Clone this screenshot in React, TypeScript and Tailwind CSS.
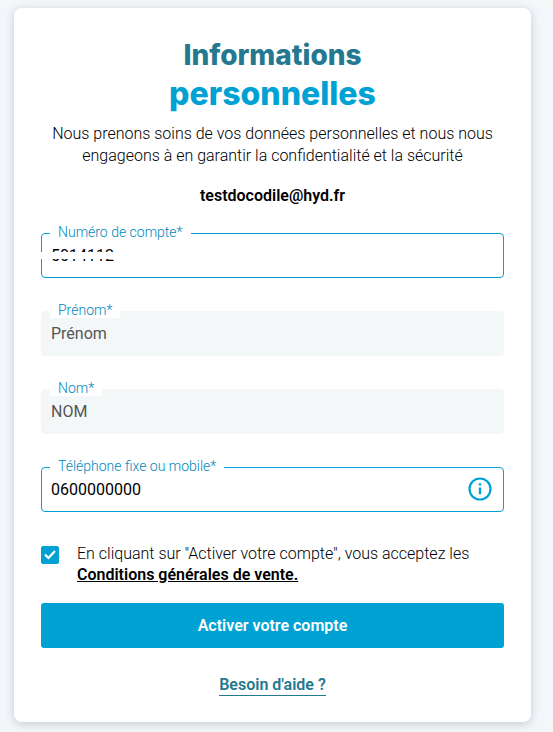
import { useState } from 'react';
import type { InputHTMLAttributes, ReactNode } from 'react';
import { clsx } from 'clsx';

type FieldProps = InputHTMLAttributes<HTMLInputElement> & {
  id: string;
  label: string;
  children?: ReactNode;
};

function Field({ id, label, children, disabled, ...props }: FieldProps) {
  return (
    <div className="relative">
      <input
        id={id}
        disabled={disabled}
        className={clsx(
          'block h-[45px] w-full rounded border px-[9px] text-base font-normal outline-none',
          disabled ? 'border-[#f4f7f8] bg-[#f4f7f8] text-[#555555]' : 'border-[#00a2d3] bg-white text-black',
        )}
        {...props}
      />
      <label
        htmlFor={id}
        className="absolute -top-[9px] left-[9px] bg-white px-2 text-sm leading-4 text-[#0088bd]"
      >
        {label}
      </label>
      {children}
    </div>
  );
}

export default function App() {
  const [phone, setPhone] = useState('0600000000');
  const [accepted, setAccepted] = useState(true);

  return (
    <div className="bg-[#f4f7f8] pt-2 pb-2.5 font-[Roboto,sans-serif] text-base font-light text-black">
      <div className="bg-[#f4f6fb] pr-[22px] pl-3.5">
        <main className="rounded-lg bg-white px-[27px] pt-[30px] pb-[26px] shadow-[0_2px_10px_rgba(60,70,90,0.25)]">
          <h1 className="text-center font-[Inter,sans-serif] font-extrabold">
            <span className="block text-[28px] leading-[34px] text-[#24788f]">Informations</span>
            <span className="block text-[32px] leading-[44px] text-[#00a2d3]">personnelles</span>
          </h1>

          <p className="mt-[7px] text-center leading-[22px]">
            Nous prenons soins de vos données personnelles et nous nous engageons à en garantir la
            confidentialité et la sécurité
          </p>
          <p className="mt-[18px] text-center leading-[22px] font-semibold">testdocodile@hyd.fr</p>

          <form className="mt-[26px]" onSubmit={(e) => e.preventDefault()}>
            <div className="flex flex-col gap-[33px]">
              <Field id="account" label="Numéro de compte*" defaultValue="5014112">
                <span className="absolute top-[19px] -left-1 h-[7px] w-20 bg-white" />
              </Field>
              <Field id="firstname" label="Prénom*" defaultValue="Prénom" disabled />
              <Field id="lastname" label="Nom*" defaultValue="NOM" disabled />
              <Field
                id="phone"
                type="tel"
                label="Téléphone fixe ou mobile*"
                value={phone}
                onChange={(e) => setPhone(e.target.value)}
              >
                <button type="button" aria-label="Information" className="absolute top-2.5 right-3 text-[#00a2d3]">
                  <svg viewBox="0 0 24 24" className="size-6" fill="none">
                    <circle cx="12" cy="12" r="10.5" stroke="currentColor" strokeWidth="2.2" />
                    <path d="M12 6.2v2.4M12 10.6v6.6" stroke="currentColor" strokeWidth="2.4" />
                  </svg>
                </button>
              </Field>
            </div>

            <div className="mt-[31px] flex items-start gap-[18px]">
              <span className="relative mt-[3px] size-[18px] shrink-0">
                <input
                  id="terms"
                  type="checkbox"
                  checked={accepted}
                  onChange={(e) => setAccepted(e.target.checked)}
                  className="peer block size-[18px] appearance-none rounded-xs border border-[#00a2d3] checked:bg-[#00a2d3]"
                />
                <svg
                  viewBox="0 0 18 18"
                  className="pointer-events-none absolute inset-0 hidden size-[18px] peer-checked:block"
                  fill="none"
                >
                  <path d="M4 8.6l3.5 3.4 6.5-7" stroke="white" strokeWidth="2.2" />
                </svg>
              </span>
              <label htmlFor="terms" className="leading-[21px]">
                En cliquant sur "Activer votre compte", vous acceptez les{' '}
                <a href="#conditions" className="font-semibold underline">
                  Conditions générales de vente.
                </a>
              </label>
            </div>

            <button type="submit" className="mt-[18px] block h-[45px] w-full rounded-[3px] bg-[#00a2d3] font-semibold text-white">
              Activer votre compte
            </button>
          </form>

          <p className="mt-[26px] text-center leading-[21px]">
            <a href="#aide" className="inline-block border-b border-[#24788f] font-semibold text-[#24788f]">
              Besoin d'aide ?
            </a>
          </p>
        </main>
      </div>
    </div>
  );
}
